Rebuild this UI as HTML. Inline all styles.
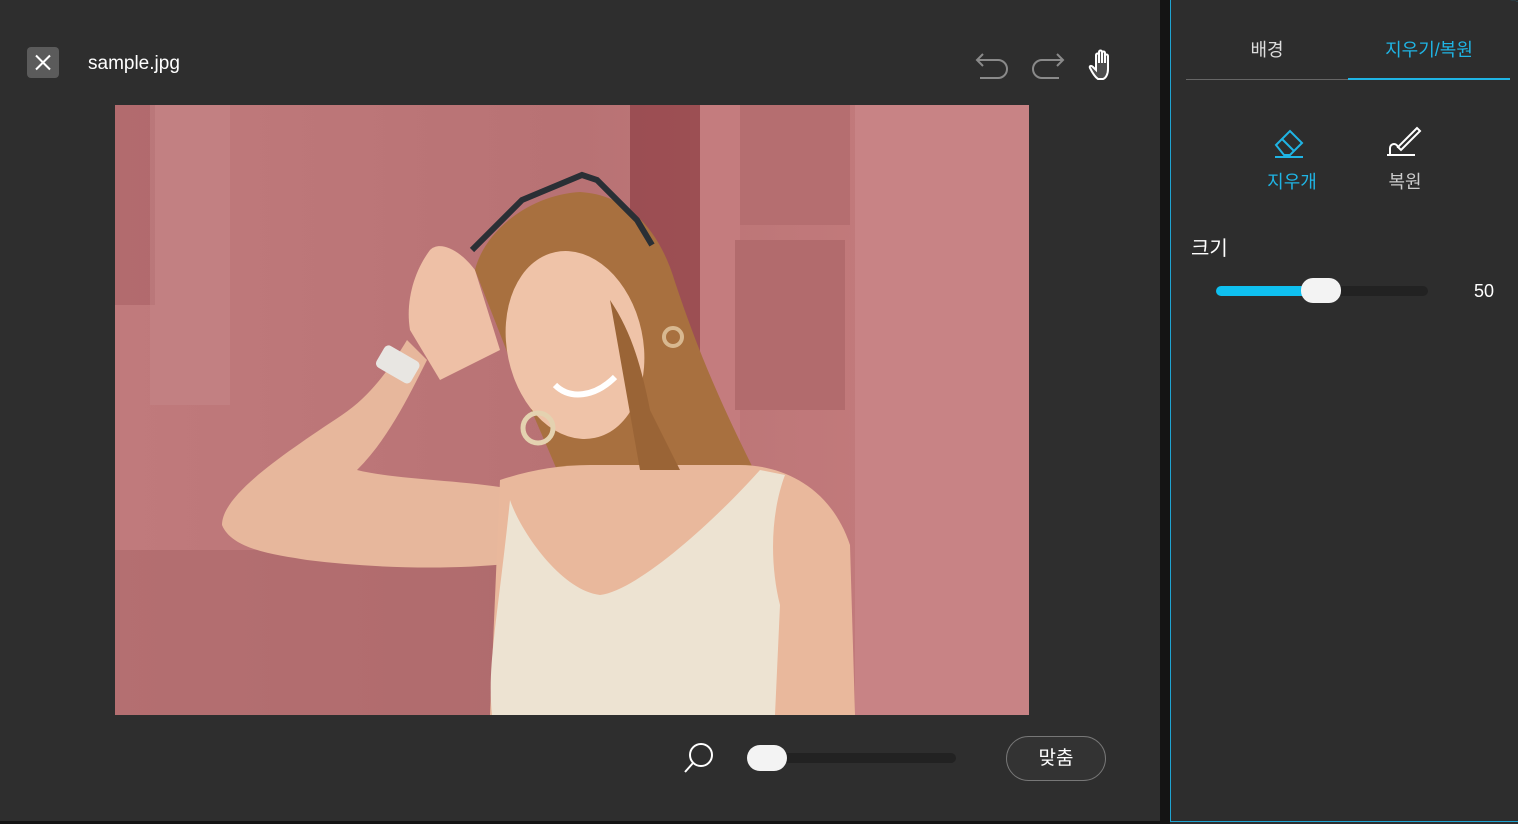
<!DOCTYPE html>
<html><head><meta charset="utf-8"><style>
*{margin:0;padding:0;box-sizing:border-box}
body{width:1518px;height:824px;background:#2e2e2e;overflow:hidden;position:relative;font-family:"Liberation Sans","Noto Sans CJK KR",sans-serif;color:#fff}
.abs{position:absolute}
</style></head><body>
<div class="abs" style="left:0;top:0;width:1160px;height:824px;background:#2e2e2e"></div>
<div class="abs" style="left:1160px;top:0;width:10px;height:824px;background:#141414"></div>
<div class="abs" style="left:1170px;top:0;width:360px;height:822px;background:#2d2d2d;border-left:1px solid #1fa3d0;border-right:1px solid #1fa3d0;border-bottom:1px solid #1fa3d0;border-radius:0 20px 10px 0"></div>
<div class="abs" style="left:0;top:821px;width:1170px;height:3px;background:#141414"></div>

<div class="abs" style="left:27px;top:47px;width:32px;height:31px;background:#5b5b5b;border-radius:4px"></div>
<svg class="abs" style="left:27px;top:47px" width="32" height="31"><path d="M9 8.5L23 22.5M23 8.5L9 22.5" stroke="#fff" stroke-width="2"/></svg>
<div class="abs" style="left:88px;top:53px;font-size:19px;color:#fff">sample.jpg</div>

<svg class="abs" style="left:970px;top:45px" width="150" height="40" fill="none">
<path d="M8 15H28a9 9 0 0 1 0 18H10M13 9L7 15l6 6" stroke="#8a8a8a" stroke-width="2"/>
<path d="M93 15H72a9 9 0 0 0 0 18H89M87 9l6 6-6 6" stroke="#8a8a8a" stroke-width="2"/>
<path d="M128 34c-3-2-6-7-8-11-1-2 1-3 3-1l3 3V10c0-2 3-2 3 0v8V7c0-2 3-2 3 0v11V8c0-2 3-2 3 0v10-7c0-2 3-2 3 0v13c0 5-2 9-5 10z" stroke="#fff" stroke-width="2" fill="#fff" fill-opacity=".15"/>
</svg>

<svg class="abs" style="left:115px;top:105px" width="914" height="610" viewBox="115 105 914 610">
<defs><linearGradient id="bg" x1="0" x2="1"><stop offset="0" stop-color="#c07a7c"/><stop offset=".5" stop-color="#b87274"/><stop offset="1" stop-color="#c77e7f"/></linearGradient></defs>
<rect x="115" y="105" width="914" height="610" fill="url(#bg)"/>
<rect x="115" y="105" width="40" height="200" fill="#a45c60" opacity=".5"/>
<rect x="150" y="105" width="80" height="300" fill="#c88d8e" opacity=".4"/>
<rect x="630" y="105" width="70" height="330" fill="#8e3f45" opacity=".7"/>
<rect x="700" y="105" width="40" height="420" fill="#c47c7e"/>
<rect x="740" y="105" width="110" height="120" fill="#b56e70"/>
<rect x="855" y="105" width="174" height="610" fill="#c88385"/>
<rect x="735" y="240" width="110" height="170" fill="#b26b6d"/>
<rect x="115" y="550" width="400" height="165" fill="#a86466" opacity=".5"/>
<path d="M222 525c0-30 60-70 120-110 30-20 50-50 65-75l20 20c-20 40-40 80-70 110 40 10 110 10 160 20l20 70c-60 10-150 10-230 0-30-5-75-10-85-35z" fill="#e7b79c"/>
<path d="M430 250c10-10 30 0 45 20l25 80-60 30-30-50c-5-30 5-60 20-80z" fill="#eec0a6"/>
<rect x="378" y="352" width="40" height="25" rx="5" fill="#e8e6e2" transform="rotate(30 398 364)"/>
<path d="M475 270c10-40 55-75 105-78 50 3 80 40 95 90 20 60 40 110 80 190l-60 20-40 60-30-40-50 0-60-140z" fill="#a8703f"/>
<path d="M500 480c30-10 60-15 90-15h150c40 0 90 20 110 80l5 170H490z" fill="#e9b89c"/>
<ellipse cx="575" cy="345" rx="68" ry="95" fill="#efc3a8" transform="rotate(-12 575 345)"/>
<path d="M610 300c20 30 30 60 40 110l30 60-40 0z" fill="#9a6436"/>
<path d="M555 385c15 15 40 12 60-8" stroke="#fff" stroke-width="6" fill="none"/>
<circle cx="538" cy="428" r="15" stroke="#e4d2b0" stroke-width="5" fill="none"/>
<circle cx="673" cy="337" r="9" stroke="#d8b890" stroke-width="4" fill="none"/>
<path d="M510 500c10 30 50 90 90 95 40-5 120-80 160-125l25 5c-15 40-15 90-5 130l-5 110H492c-5-50 5-90 18-215z" fill="#ede3d2"/>
<path d="M472 250l50-50 60-25 15 5 40 40 15 25" stroke="#2a2f35" stroke-width="6" fill="none"/>
</svg>

<svg class="abs" style="left:680px;top:740px" width="40" height="36" fill="none"><circle cx="21" cy="15" r="11" stroke="#fff" stroke-width="2"/><path d="M13 23L5 32" stroke="#fff" stroke-width="2"/></svg>
<div class="abs" style="left:750px;top:753px;width:206px;height:10px;background:#222;border-radius:5px"></div>
<div class="abs" style="left:747px;top:745px;width:40px;height:26px;background:#f3f3f3;border-radius:13px"></div>
<div class="abs" style="left:1006px;top:736px;width:100px;height:45px;border:1px solid #777;border-radius:23px;background:#333;font-size:19px;text-align:center;line-height:43px">맞춤</div>

<div class="abs" style="left:1186px;top:36px;width:162px;text-align:center;font-size:18px;color:#ddd">배경</div>
<div class="abs" style="left:1348px;top:36px;width:162px;text-align:center;font-size:18px;color:#1fb4e4">지우기/복원</div>
<div class="abs" style="left:1186px;top:79px;width:324px;height:1px;background:#666"></div>
<div class="abs" style="left:1348px;top:78px;width:162px;height:2px;background:#1fb4e4"></div>

<svg class="abs" style="left:1270px;top:124px" width="40" height="36" fill="none" stroke="#1fb4e4" stroke-width="2"><path d="M6 21L20 7l12 12-12 12H14z M12 15l12 12 M5 33h28"/></svg>
<div class="abs" style="left:1262px;top:168px;width:60px;text-align:center;font-size:18px;color:#1fb4e4">지우개</div>
<svg class="abs" style="left:1384px;top:124px" width="40" height="36" fill="none" stroke="#fff" stroke-width="2"><path d="M3 31h28 M6 31v-7a4 4 0 0 1 8 0 M14 23l3 3 19-19-3-3z"/></svg>
<div class="abs" style="left:1375px;top:168px;width:60px;text-align:center;font-size:18px;color:#ccc">복원</div>

<div class="abs" style="left:1191px;top:232px;font-size:20px;color:#fff">크기</div>
<div class="abs" style="left:1216px;top:286px;width:212px;height:10px;background:#222;border-radius:5px"></div>
<div class="abs" style="left:1216px;top:286px;width:110px;height:10px;background:#0fc0f0;border-radius:5px"></div>
<div class="abs" style="left:1301px;top:278px;width:40px;height:25px;background:#f3f3f3;border-radius:12px"></div>
<div class="abs" style="left:1474px;top:281px;font-size:18px;color:#fff">50</div>
</body></html>
